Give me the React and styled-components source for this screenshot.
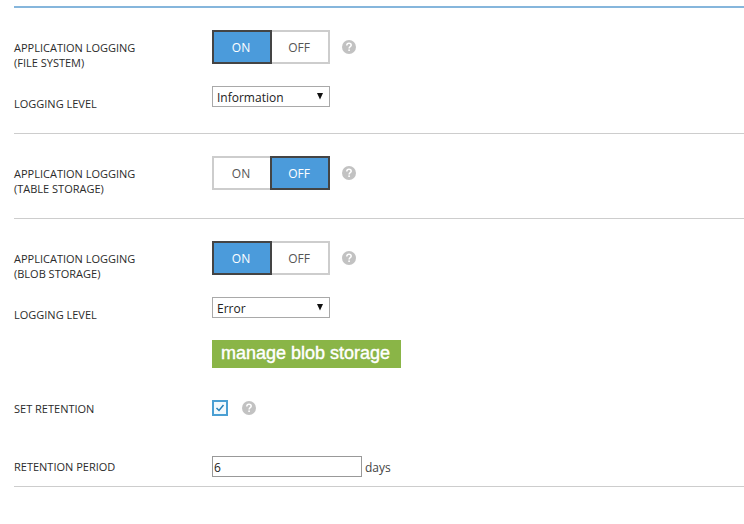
import React, { useState } from "react";
import styled, { createGlobalStyle } from "styled-components";

const GlobalStyle = createGlobalStyle`
  *, *::before, *::after { box-sizing: border-box; }
  body {
    margin: 0;
    background: #fff;
    color: #2b2b2b;
    font-family: "Open Sans", "Noto Sans", sans-serif;
    font-size: 11px;
    line-height: 15px;
  }
`;

const Page = styled.main`
  padding: 6px 0 24px 14px;
`;

const Panel = styled.form`
  border-top: 2px solid #86b6dc;
`;

const Section = styled.section`
  display: flex;
  flex-direction: column;
  gap: 16px;
  padding: 22px 0 ${(p) => (p.$tight ? 9 : 22)}px;
  border-bottom: 1px solid #cdcdcd;
`;

const Row = styled.div`
  display: grid;
  grid-template-columns: 198px 1fr;
  align-items: ${(p) => (p.$centered ? "center" : "start")};
  padding-top: ${(p) => p.$space || 0}px;
`;

const labelText = `
  color: #2b2b2b;
  font-size: 11px;
  line-height: 15px;
`;

const Label = styled.label`
  ${labelText}
  padding-top: ${(p) => (p.$centered ? 0 : 10)}px;
`;

const GroupLabel = styled.div`
  ${labelText}
  padding-top: 10px;
`;

const Field = styled.div`
  display: flex;
  align-items: center;
`;

const ToggleGroup = styled.div`
  display: flex;
`;

const ToggleButton = styled.button`
  width: 60px;
  height: 34px;
  padding: 2px 2px 0 0;
  border: 2px solid ${(p) => (p.$on ? "#444" : "#cdcdcd")};
  background: ${(p) => (p.$on ? "#4b9bdb" : "#fff")};
  color: ${(p) => (p.$on ? "#fff" : "#555")};
  font: 12px/16px "Open Sans", "Noto Sans", sans-serif;
  z-index: ${(p) => (p.$on ? 1 : 0)};
  cursor: pointer;
  & + & { margin-left: -2px; }
`;

const HelpButton = styled.button`
  display: flex;
  margin-left: ${(p) => (p.$wide ? 14 : 12)}px;
  padding: 0;
  border: 0;
  background: none;
  cursor: pointer;
`;

const SelectBox = styled.div`
  display: grid;
  grid-template-columns: 102px 16px;
  align-items: center;
  width: 118px;

  svg {
    grid-area: 1 / 2;
    pointer-events: none;
    z-index: 1;
  }
`;

const Select = styled.select`
  grid-area: 1 / 1 / 2 / 3;
  appearance: none;
  width: 100%;
  height: 21px;
  padding: 2px 20px 0 4px;
  border: 1px solid #a9a9a9;
  border-radius: 0;
  background: #fff;
  color: #222;
  font: 12px/17px "Open Sans", "Noto Sans", sans-serif;
`;

const ManageButton = styled.button`
  height: 28px;
  padding: 0 11px 2px 9px;
  border: 0;
  background: #8ab547;
  color: #fff;
  font: 18px/26px "Liberation Sans", Arial, sans-serif;
  -webkit-text-stroke: 0.4px #fff;
  white-space: nowrap;
  cursor: pointer;
`;

const CheckboxBox = styled.span`
  display: grid;
  width: 16px;
  height: 16px;

  svg {
    grid-area: 1 / 1;
    pointer-events: none;
    z-index: 1;
  }
`;

const Checkbox = styled.input`
  grid-area: 1 / 1;
  appearance: none;
  width: 16px;
  height: 16px;
  margin: 0;
  border: 2px solid #4a9fd3;
  background: #f2f9fd;
  & + svg { visibility: hidden; }
  &:checked + svg { visibility: visible; }
`;

const TextInput = styled.input`
  width: 150px;
  height: 21px;
  padding: 2px 1px 0;
  border: 1px solid #999;
  background: #fff;
  color: #222;
  font: 12px/17px "Open Sans", "Noto Sans", sans-serif;
`;

const Unit = styled.span`
  margin-left: 3px;
  padding-top: 2px;
  color: #444;
  font-size: 12px;
`;

function Help({ wide, topic }) {
  return (
    <HelpButton type="button" $wide={wide} aria-label={`Help: ${topic}`}>
      <svg width="14" height="14" viewBox="0 0 14 14" aria-hidden="true">
        <circle cx="7" cy="7" r="7" fill="#c2c2c2" />
        <path
          d="M4.8 5.4C4.8 3.9 5.7 3.2 7 3.2S9.2 4 9.2 5.2C9.2 6.6 7.1 6.7 7.1 8.4"
          fill="none"
          stroke="#fff"
          strokeWidth="1.5"
        />
        <rect x="6.3" y="9.4" width="1.6" height="1.6" fill="#fff" />
      </svg>
    </HelpButton>
  );
}

function LoggingToggle({ id, target, initial }) {
  const [on, setOn] = useState(initial);
  return (
    <Row>
      <GroupLabel id={id}>
        APPLICATION LOGGING
        <br />({target})
      </GroupLabel>
      <Field>
        <ToggleGroup role="group" aria-labelledby={id}>
          <ToggleButton type="button" $on={on} aria-pressed={on} onClick={() => setOn(true)}>
            ON
          </ToggleButton>
          <ToggleButton type="button" $on={!on} aria-pressed={!on} onClick={() => setOn(false)}>
            OFF
          </ToggleButton>
        </ToggleGroup>
        <Help topic={`application logging, ${target.toLowerCase()}`} />
      </Field>
    </Row>
  );
}

function LevelSelect({ id, initial }) {
  return (
    <Row>
      <Label htmlFor={id}>LOGGING LEVEL</Label>
      <SelectBox>
        <Select id={id} defaultValue={initial}>
          <option>Error</option>
          <option>Warning</option>
          <option>Information</option>
          <option>Verbose</option>
        </Select>
        <svg width="12" height="8" viewBox="0 0 12 8" aria-hidden="true">
          <path d="M3 0H9L6 6.5Z" fill="#111" />
        </svg>
      </SelectBox>
    </Row>
  );
}

export default function App() {
  return (
    <>
      <GlobalStyle />
      <Page>
        <Panel onSubmit={(e) => e.preventDefault()}>
          <Section>
            <LoggingToggle id="file-logging" target="FILE SYSTEM" initial={true} />
            <LevelSelect id="file-level" initial="Information" />
          </Section>
          <Section>
            <LoggingToggle id="table-logging" target="TABLE STORAGE" initial={false} />
          </Section>
          <Section $tight>
            <LoggingToggle id="blob-logging" target="BLOB STORAGE" initial={true} />
            <LevelSelect id="blob-level" initial="Error" />
            <Row $space={2}>
              <span />
              <Field>
                <ManageButton type="button">manage blob storage</ManageButton>
              </Field>
            </Row>
            <Row $centered $space={16}>
              <Label $centered htmlFor="retention">SET RETENTION</Label>
              <Field>
                <CheckboxBox>
                  <Checkbox id="retention" type="checkbox" defaultChecked />
                  <svg width="16" height="16" viewBox="0 0 16 16" aria-hidden="true">
                    <path d="M4.5 8L7 10.5L11.5 5" fill="none" stroke="#2580b8" strokeWidth="1.5" />
                  </svg>
                </CheckboxBox>
                <Help wide topic="set retention" />
              </Field>
            </Row>
            <Row $centered $space={24}>
              <Label $centered htmlFor="period">RETENTION PERIOD</Label>
              <Field>
                <TextInput id="period" type="text" defaultValue="6" />
                <Unit>days</Unit>
              </Field>
            </Row>
          </Section>
        </Panel>
      </Page>
    </>
  );
}
